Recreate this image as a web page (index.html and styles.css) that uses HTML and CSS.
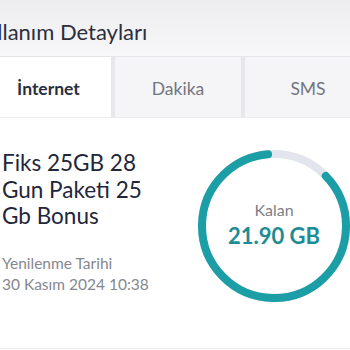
FILE: index.html
```html
<!DOCTYPE html>
<html lang="tr">
<head>
  <meta charset="UTF-8">
  <meta name="viewport" content="width=device-width, initial-scale=1.0">
  <title>Kullanım Detayları</title>
  <link rel="stylesheet" href="styles.css">
</head>
<body>
  <div class="page">
    <div class="header">
      <h2 class="page-title">Kullanım Detayları</h2>
    </div>

    <div class="tabs">
      <div class="tab active">İnternet</div>
      <div class="tab">Dakika</div>
      <div class="tab">SMS</div>
    </div>

    <div class="card">
      <div class="package">
        <div class="package-name">Fiks 25GB 28 Gun Paketi 25 Gb Bonus</div>
        <div class="renew">
          <div>Yenilenme Tarihi</div>
          <div>30 Kasım 2024 10:38</div>
        </div>
      </div>

      <div class="ring">
        <svg width="152" height="152" viewBox="0 0 152 152">
          <circle cx="76" cy="76" r="72" fill="none" stroke="#e3e5ee" stroke-width="8"/>
          <!-- kalan: 21.90 / 25 -->
          <circle cx="76" cy="76" r="72" fill="none" stroke="#1b9ea6" stroke-width="8"
                  stroke-linecap="round" stroke-dasharray="388 452.4" transform="rotate(-44 76 76)"/>
        </svg>
        <div class="ring-text">
          <div class="ring-label">Kalan</div>
          <div class="ring-value">21.90 GB</div>
        </div>
      </div>
    </div>
  </div>
</body>
</html>
```

FILE: styles.css
```css
body {
  margin: 0;
  font-family: Lato, "Noto Sans", sans-serif;
  background: #ffffff;
}
.page {
  width: 350px;
  height: 350px;
  overflow: hidden;
  position: relative;
}
.header {
  height: 56px;
  background: linear-gradient(#ededf0, #f7f7f9);
  border-bottom: 1px solid #e6e6ea;
  overflow: hidden;
}
.page-title {
  margin: 0 0 0 -29px;
  padding-top: 21px;
  font-size: 22px;
  font-weight: 400;
  line-height: 22px;
  color: #2c2f3b;
  white-space: nowrap;
}
.tabs {
  display: grid;
  grid-template-columns: 125px 126px 126px;
  gap: 4px;
  margin-left: -14px;
  height: 60px;
  background: #e8e8ec;
  border-bottom: 1px solid #ececf0;
}
.tab {
  display: flex;
  justify-content: center;
  align-items: center;
  padding-top: 2px;
  background: #f5f5f8;
  font-size: 17.5px;
  color: #73757f;
}
.tab.active {
  background: #ffffff;
  color: #2b2e3b;
  font-weight: 700;
}
.card {
  display: flex;
  padding-top: 32px;
  height: 198px;
  border-bottom: 1px solid #ededf0;
}
.package {
  width: 199px;
  padding-left: 2px;
}
.package-name {
  font-size: 22.5px;
  line-height: 26.5px;
  color: #22263a;
  width: 170px;
}
.renew {
  margin-top: 23px;
  font-size: 15.5px;
  line-height: 21.5px;
  color: #85878f;
}
.ring {
  position: relative;
  width: 152px;
  height: 152px;
  flex-shrink: 0;
}
.ring svg {
  display: block;
}
.ring-text {
  position: absolute;
  inset: 0;
  display: flex;
  flex-direction: column;
  justify-content: center;
  align-items: center;
  padding-bottom: 4px;
}
.ring-label {
  font-size: 16px;
  color: #7d7f87;
}
.ring-value {
  margin-top: 3px;
  font-size: 22px;
  font-weight: 700;
  color: #1d8c93;
}
```
